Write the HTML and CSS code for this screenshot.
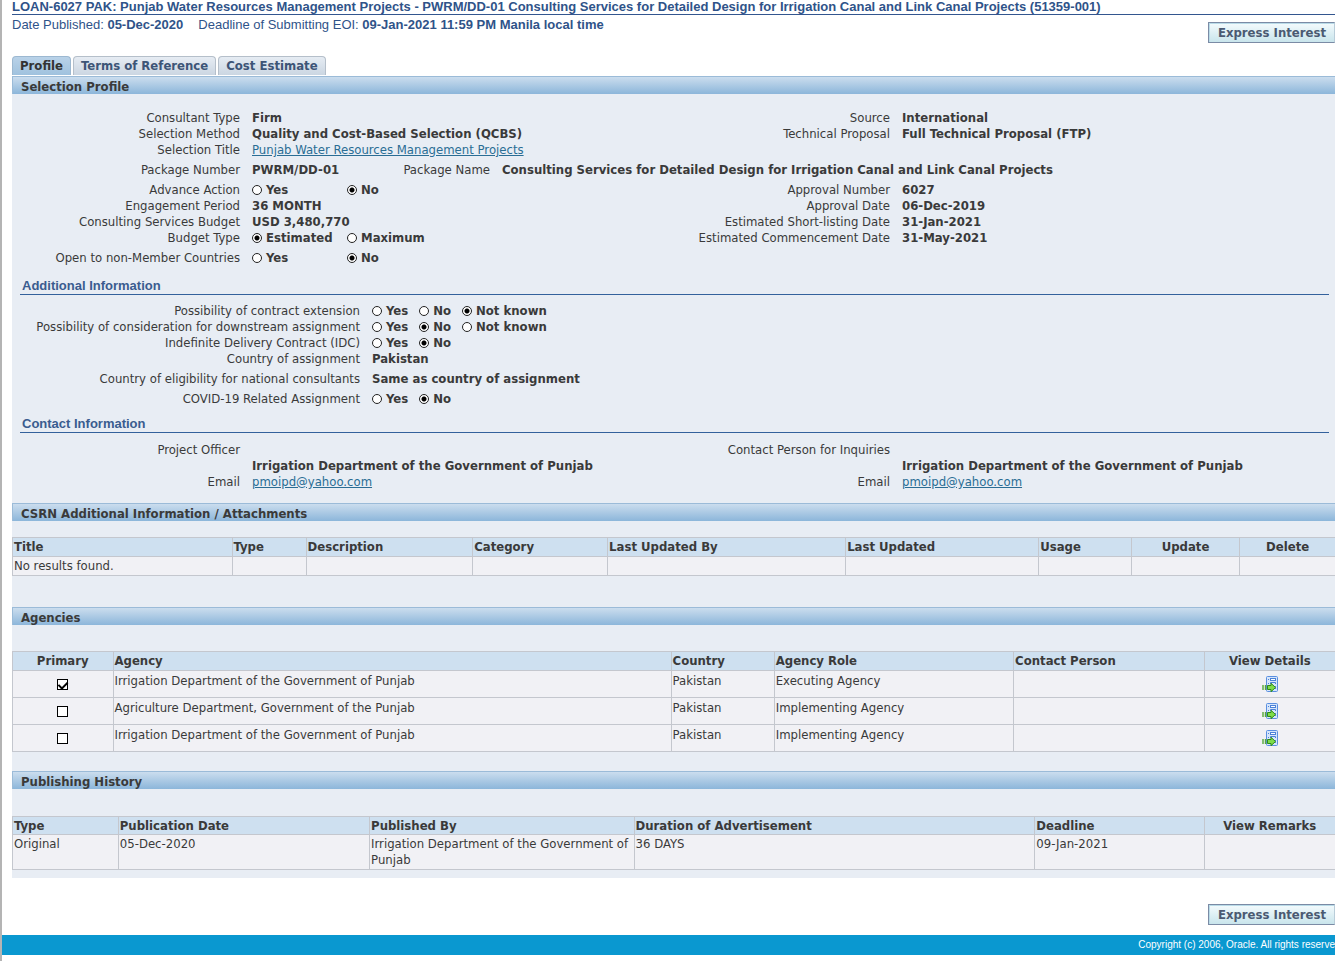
FILE: index.html
```html
<!DOCTYPE html>
<html lang="en">
<head>
<meta charset="utf-8">
<title>Consulting Services Recruitment Notice</title>
<link rel="stylesheet" href="styles.css">
</head>
<body>
<svg class="defs" width="0" height="0" aria-hidden="true">
  <symbol id="details" viewBox="0 0 16 16">
    <rect x="4.500" y=".5" width="11" height="15" rx="1" fill="#d5e5fb" stroke="#5b8fe0"/>
    <path d="M6 3.500h1M6 7.500h1" stroke="#4c82d8"/>
    <rect x="8.500" y="2.500" width="5" height="2" fill="#fff" stroke="#4c82d8"/>
    <path d="M8.500 8V6.500h5V8M13 10.500h1M13 12.500h1" fill="none" stroke="#4c82d8"/>
    <path d="M1 9v5M3.500 9v5" stroke="#57a93a" stroke-width="1.400"/>
    <path d="M5.500 9.500h3.500V7.300l4.500 4.200-4.500 4.200v-2.200H5.500z" fill="#7fdc4a" stroke="#2d8a1a"/>
  </symbol>
</svg>
<header class="top">
  <h1 class="title">LOAN-6027 PAK: Punjab Water Resources Management Projects - PWRM/DD-01 Consulting Services for Detailed Design for Irrigation Canal and Link Canal Projects (51359-001)</h1>
  <div class="meta-row">
    <p class="meta"><span>Date Published: <b>05-Dec-2020</b></span><span>Deadline of Submitting EOI: <b>09-Jan-2021 11:59 PM Manila local time</b></span></p>
    <button class="btn" type="button">Express Interest</button>
  </div>
</header>
<main class="main">
  <nav class="tabs">
    <a class="tab active" href="#profile">Profile</a>
    <a class="tab" href="#tor">Terms of Reference</a>
    <a class="tab" href="#cost">Cost Estimate</a>
  </nav>
  <div class="panel" id="profile">
    <h2 class="bar">Selection Profile</h2>
    <div class="form first">
      <div class="row"><span class="label">Consultant Type</span><b>Firm</b><span class="label">Source</span><b>International</b></div>
      <div class="row"><span class="label">Selection Method</span><b>Quality and Cost-Based Selection (QCBS)</b><span class="label">Technical Proposal</span><b>Full Technical Proposal (FTP)</b></div>
      <div class="row"><span class="label">Selection Title</span><a href="#title">Punjab Water Resources Management Projects</a></div>
      <div class="row tall package"><span class="label">Package Number</span><b>PWRM/DD-01</b><span class="label">Package Name</span><b>Consulting Services for Detailed Design for Irrigation Canal and Link Canal Projects</b></div>
      <div class="row"><span class="label" id="l-adv">Advance Action</span>
        <div class="radios spaced" role="radiogroup" aria-labelledby="l-adv"><label><input type="radio" name="adv">Yes</label><label><input type="radio" name="adv" checked>No</label></div>
        <span class="label">Approval Number</span><b>6027</b></div>
      <div class="row"><span class="label">Engagement Period</span><b>36 MONTH</b><span class="label">Approval Date</span><b>06-Dec-2019</b></div>
      <div class="row"><span class="label">Consulting Services Budget</span><b>USD 3,480,770</b><span class="label">Estimated Short-listing Date</span><b>31-Jan-2021</b></div>
      <div class="row"><span class="label" id="l-bud">Budget Type</span>
        <div class="radios spaced" role="radiogroup" aria-labelledby="l-bud"><label><input type="radio" name="bud" checked>Estimated</label><label><input type="radio" name="bud">Maximum</label></div>
        <span class="label">Estimated Commencement Date</span><b>31-May-2021</b></div>
      <div class="row tall"><span class="label" id="l-open">Open to non-Member Countries</span>
        <div class="radios spaced" role="radiogroup" aria-labelledby="l-open"><label><input type="radio" name="open">Yes</label><label><input type="radio" name="open" checked>No</label></div></div>
    </div>

    <h3 class="sub">Additional Information</h3>
    <div class="form wide">
      <div class="row"><span class="label" id="l-ext">Possibility of contract extension</span>
        <div class="radios" role="radiogroup" aria-labelledby="l-ext"><label><input type="radio" name="ext">Yes</label><label><input type="radio" name="ext">No</label><label><input type="radio" name="ext" checked>Not known</label></div></div>
      <div class="row"><span class="label" id="l-down">Possibility of consideration for downstream assignment</span>
        <div class="radios" role="radiogroup" aria-labelledby="l-down"><label><input type="radio" name="down">Yes</label><label><input type="radio" name="down" checked>No</label><label><input type="radio" name="down">Not known</label></div></div>
      <div class="row"><span class="label" id="l-idc">Indefinite Delivery Contract (IDC)</span>
        <div class="radios" role="radiogroup" aria-labelledby="l-idc"><label><input type="radio" name="idc">Yes</label><label><input type="radio" name="idc" checked>No</label></div></div>
      <div class="row"><span class="label">Country of assignment</span><b>Pakistan</b></div>
      <div class="row tall"><span class="label">Country of eligibility for national consultants</span><b>Same as country of assignment</b></div>
      <div class="row"><span class="label" id="l-cov">COVID-19 Related Assignment</span>
        <div class="radios" role="radiogroup" aria-labelledby="l-cov"><label><input type="radio" name="cov">Yes</label><label><input type="radio" name="cov" checked>No</label></div></div>
    </div>

    <h3 class="sub">Contact Information</h3>
    <div class="form contact">
      <div class="row"><span class="label">Project Officer</span><span></span><span class="label">Contact Person for Inquiries</span></div>
      <div class="row"><span></span><b>Irrigation Department of the Government of Punjab</b><span></span><b>Irrigation Department of the Government of Punjab</b></div>
      <div class="row"><span class="label">Email</span><a href="mailto:pmoipd@yahoo.com">pmoipd@yahoo.com</a><span class="label">Email</span><a href="mailto:pmoipd@yahoo.com">pmoipd@yahoo.com</a></div>
    </div>

    <h2 class="bar">CSRN Additional Information / Attachments</h2>
    <table class="grid attachments">
      <thead><tr><th>Title</th><th>Type</th><th>Description</th><th>Category</th><th>Last Updated By</th><th>Last Updated</th><th>Usage</th><th class="center">Update</th><th class="center">Delete</th></tr></thead>
      <tbody><tr><td>No results found.</td><td></td><td></td><td></td><td></td><td></td><td></td><td></td><td></td></tr></tbody>
    </table>

    <h2 class="bar">Agencies</h2>
    <table class="grid agencies">
      <thead><tr><th class="center">Primary</th><th>Agency</th><th>Country</th><th>Agency Role</th><th>Contact Person</th><th class="center">View Details</th></tr></thead>
      <tbody>
        <tr><td class="center"><input type="checkbox" aria-label="Primary" checked></td><td>Irrigation Department of the Government of Punjab</td><td>Pakistan</td><td>Executing Agency</td><td></td><td class="center"><a class="icon" href="#a1" aria-label="View details"><svg width="16" height="16"><use href="#details"/></svg></a></td></tr>
        <tr><td class="center"><input type="checkbox" aria-label="Primary"></td><td>Agriculture Department, Government of the Punjab</td><td>Pakistan</td><td>Implementing Agency</td><td></td><td class="center"><a class="icon" href="#a2" aria-label="View details"><svg width="16" height="16"><use href="#details"/></svg></a></td></tr>
        <tr><td class="center"><input type="checkbox" aria-label="Primary"></td><td>Irrigation Department of the Government of Punjab</td><td>Pakistan</td><td>Implementing Agency</td><td></td><td class="center"><a class="icon" href="#a3" aria-label="View details"><svg width="16" height="16"><use href="#details"/></svg></a></td></tr>
      </tbody>
    </table>

    <h2 class="bar">Publishing History</h2>
    <table class="grid history">
      <thead><tr><th>Type</th><th>Publication Date</th><th>Published By</th><th>Duration of Advertisement</th><th>Deadline</th><th class="center">View Remarks</th></tr></thead>
      <tbody><tr><td>Original</td><td>05-Dec-2020</td><td>Irrigation Department of the Government of Punjab</td><td>36 DAYS</td><td>09-Jan-2021</td><td></td></tr></tbody>
    </table>
  </div>
  <div class="actions"><button class="btn" type="button">Express Interest</button></div>
</main>
<footer class="footer">Copyright (c) 2006, Oracle. All rights reserve</footer>
</body>
</html>
```
FILE: styles.css
```css
* { box-sizing: border-box; }
html { border-left: 2px solid #b4b4b4; min-height: 100%; background: #fff; }
body {
  margin: 0;
  font: 13px/16px "DejaVu Sans Condensed", Tahoma, sans-serif;
  color: #3a3a3a;
}
h1, h2, h3, p { margin: 0; }
a { color: #2a6d94; }
.defs { display: block; }

/* Page header */
.top { font-family: "Liberation Sans", Arial, sans-serif; color: #2f5389; padding-left: 10px; }
.title { font-size: 13px; line-height: 14px; border-bottom: 1px solid #33568f; }
.meta-row { display: flex; justify-content: space-between; align-items: flex-start; }
.meta { display: flex; flex-wrap: wrap; gap: 15px; padding-top: 2px; }
.btn {
  height: 21px;
  padding: 0 8px 0 9px;
  border: 1px solid #7b8ba5;
  border-right-color: #b9cdd9;
  background: linear-gradient(#f4fbfd, #c9e5ec);
  box-shadow: inset 1px 1px #b9dbe8;
  font: bold 13px/16px "DejaVu Sans Condensed", Tahoma, sans-serif;
  color: #4b5a72;
  white-space: nowrap;
}
.meta-row .btn { margin-top: 7px; }
.main { padding-left: 10px; }

/* Tabs */
.tabs { display: flex; gap: 2px; margin: 13px 0 1px; }
.tab {
  height: 19px;
  padding: 1px 7px 0;
  border: 1px solid #b5bfca;
  border-bottom: 0;
  border-radius: 4px 4px 0 0;
  background: linear-gradient(#e6ecf3, #cbd6e2);
  font-weight: bold;
  color: #3d5577;
  text-decoration: none;
}
.tab.active { background: linear-gradient(#b9d2e8, #a0c2de); border-color: #9cb8d1; color: #333; }

.panel { background: #e8edf4; padding-bottom: 8px; }
.bar {
  height: 18px;
  padding: 1px 8px 0;
  border: 1px solid #9bbbd8;
  border-width: 1px 0 0 1px;
  background: linear-gradient(#cbddee, #8cb6da);
  font-size: 13px;
  line-height: 18px;
}

/* Label and value rows */
.form { display: flex; flex-direction: column; }
.form.first { padding: 16px 0 8px; }
.form.wide { padding: 8px 0 9px; }
.form.contact { padding: 9px 0 13px; }
.row {
  display: grid;
  grid-template-columns: 228px 1fr 193px 1fr;
  column-gap: 12px;
  align-items: center;
  min-height: 16px;
  white-space: nowrap;
}
.row.tall { min-height: 24px; }
.row.package { grid-template-columns: 228px 126px 100px 1fr; }
.wide .row { grid-template-columns: 348px 1fr; }
.label { text-align: right; }
.radios { display: flex; gap: 11px; font-weight: bold; }
.radios label { display: flex; align-items: center; gap: 4px; }
.spaced label { min-width: 84px; }
input { appearance: none; margin: 0; background: #fff; border: 1px solid #222; }
input[type="radio"] { width: 10px; height: 10px; border-radius: 50%; }
input[type="radio"]:checked { background: radial-gradient(circle, #000 2px, #fff 3px); }
.sub {
  margin: 0 6px 0 8px;
  padding-left: 2px;
  border-bottom: 1px solid #33619c;
  font: bold 13px/16px "Liberation Sans", Arial, sans-serif;
  color: #3a5c8f;
}

/* Data tables */
.grid { width: 100%; table-layout: fixed; border-collapse: collapse; margin: 26px 0 19px; }
.grid th, .grid td { border: 1px solid #c4c7ce; border-right: 0; padding: 1px; text-align: left; vertical-align: top; }
.grid th { background: #cee0f0; }
.grid td { background: #f1f1f5; height: 19px; }
.grid .center { text-align: center; vertical-align: middle; }
.attachments { margin: 16px 0 31px; }
.agencies td { height: 27px; padding-top: 2px; }
.agencies td.center { padding: 1px; }
.history { margin: 27px 0 0; }
.history th { padding: 1px 1px 0; }
.attachments th:nth-child(1) { width: 16.6%; }
.attachments th:nth-child(2) { width: 5.6%; }
.attachments th:nth-child(3) { width: 12.6%; }
.attachments th:nth-child(4) { width: 10.2%; }
.attachments th:nth-child(5) { width: 18%; }
.attachments th:nth-child(6) { width: 14.6%; }
.attachments th:nth-child(7) { width: 7%; }
.attachments th:nth-child(8) { width: 8.2%; }
.agencies th:nth-child(1) { width: 7.6%; }
.agencies th:nth-child(2) { width: 42.2%; }
.agencies th:nth-child(3) { width: 7.8%; }
.agencies th:nth-child(4) { width: 18.1%; }
.agencies th:nth-child(5) { width: 14.4%; }
.history th:nth-child(1) { width: 8%; }
.history th:nth-child(2) { width: 19%; }
.history th:nth-child(3) { width: 20%; }
.history th:nth-child(4) { width: 30.3%; }
.history th:nth-child(5) { width: 12.8%; }
input[type="checkbox"] { display: grid; place-items: start center; width: 11px; height: 11px; margin: 0 auto; border-color: #000; }
input[type="checkbox"]:checked::after {
  content: "";
  width: 4px;
  height: 7px;
  border: solid #000;
  border-width: 0 2px 2px 0;
  transform: rotate(45deg);
}
.icon, .icon svg { display: block; margin: 0 auto; width: 16px; height: 16px; }

/* Page footer */
.actions { display: flex; justify-content: flex-end; padding: 26px 0 10px; }
.footer {
  height: 20px;
  background: #0a98d0;
  color: #fff;
  font: 10px/20px "Liberation Sans", Arial, sans-serif;
  text-align: right;
}
```
